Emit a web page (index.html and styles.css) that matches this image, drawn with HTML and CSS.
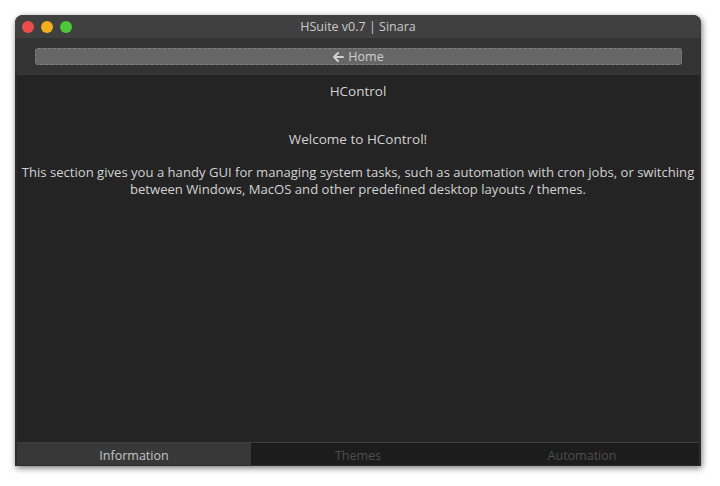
FILE: index.html
```html
<!DOCTYPE html>
<html>
<head>
<meta charset="utf-8">
<link rel="stylesheet" href="styles.css">
</head>
<body>
<div class="window">
  <div class="titlebar">
    <div class="lights">
      <span class="light red"></span>
      <span class="light yellow"></span>
      <span class="light green"></span>
    </div>
    <div class="title">HSuite v0.7 | Sinara</div>
  </div>
  <div class="toolbar">
    <button class="home"><svg class="arrow" width="11" height="10" viewBox="0 0 11 10"><path d="M5 1 L1 5 L5 9 M1.5 5 H10" fill="none" stroke="#d0d0d0" stroke-width="2" stroke-linecap="round" stroke-linejoin="round"/></svg>Home</button>
  </div>
  <div class="content">
    <div class="heading">HControl</div>
    <div class="welcome">Welcome to HControl!</div>
    <p class="desc">This section gives you a handy GUI for managing system tasks, such as automation with cron jobs, or switching between Windows, MacOS and other predefined desktop layouts / themes.</p>
  </div>
  <div class="tabs">
    <div class="tab active">Information</div>
    <div class="tab mid">Themes</div>
    <div class="tab">Automation</div>
  </div>
</div>
</body>
</html>
```
FILE: styles.css
```css
html, body {
  margin: 0;
  padding: 0;
  background: #ffffff;
  font-family: "Open Sans", "DejaVu Sans", sans-serif;
}
body {
  padding: 15px 19px 20px 15px;
  height: 486px;
  box-sizing: border-box;
}
.window {
  width: 686px;
  height: 451px;
  background: #2c2c2c;
  border-radius: 8px 8px 0 0;
  box-shadow: 1px 2px 6px rgba(0,0,0,0.55);
  display: flex;
  flex-direction: column;
  overflow: hidden;
}
.titlebar {
  height: 23px;
  background: #404040;
  display: flex;
  align-items: center;
  position: relative;
  flex-shrink: 0;
}
.lights {
  display: flex;
  gap: 7px;
  padding-left: 7px;
}
.light {
  width: 12px;
  height: 12px;
  border-radius: 50%;
  display: block;
}
.red { background: #ec4c4a; }
.yellow { background: #f2b01e; }
.green { background: #4fc73a; }
.title {
  position: absolute;
  left: 0;
  right: 0;
  text-align: center;
  color: #cacaca;
  font-size: 12.5px;
  top: 3px;
}
.toolbar {
  height: 36px;
  box-sizing: border-box;
  background: #333333;
  display: flex;
  align-items: center;
  padding: 1px 19px 0 20px;
  flex-shrink: 0;
}
.home {
  flex: 1;
  height: 17px;
  background: #666666;
  border: 1px dashed #808080;
  border-radius: 3px;
  color: #d0d0d0;
  font-family: "Open Sans", "DejaVu Sans", sans-serif;
  font-size: 12.5px;
  line-height: 14px;
  padding: 0;
  display: flex;
  align-items: center;
  justify-content: center;
  gap: 4px;
}
.arrow {
  display: block;
}
.content {
  flex: 1;
  background: #242424;
  margin: 0 2px;
  border-top: 1px solid #3a3a3a;
  display: flex;
  flex-direction: column;
  align-items: center;
  color: #d2d2d2;
  font-size: 13.1px;
  text-align: center;
}
.heading {
  margin-top: 7px;
  line-height: 18px;
  font-size: 13.5px;
}
.welcome {
  margin-top: 30px;
  line-height: 18px;
  font-size: 13.5px;
}
.desc {
  margin: 16px 0 0;
  line-height: 17px;
  padding: 0 2px;
}
.tabs {
  height: 22px;
  display: flex;
  margin: 0 2px 1px;
  border-top: 1px solid #3e3e3e;
  background: #1c1c1c;
  flex-shrink: 0;
}
.tab {
  width: 234px;
  text-align: center;
  color: #4e4e4e;
  font-size: 12.5px;
  line-height: 22px;
  padding-top: 2px;
}
.tab.mid {
  width: 214px;
}
.tab.active {
  background: #383838;
  color: #c4c4c4;
}
```
